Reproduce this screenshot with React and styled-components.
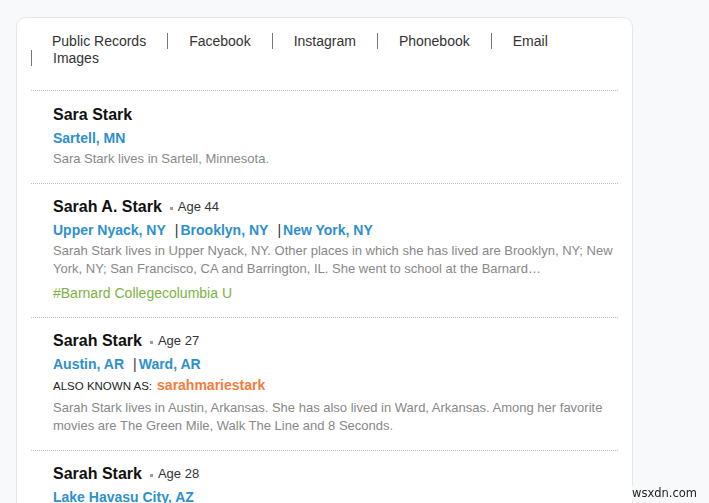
import React from "react";
import styled, { createGlobalStyle } from "styled-components";

const Global = createGlobalStyle`
  html, body { margin: 0; padding: 0; overflow: hidden; }
  body {
    background: #f8f9fb;
    font-family: "Liberation Sans", Arial, sans-serif;
    color: #333;
  }
`;

const Page = styled.div`
  padding: 17px 0 0 16px;
`;

const Card = styled.div`
  width: 587px;
  background: #fff;
  border: 1px solid #e6e6e8;
  border-radius: 10px;
  padding: 15px 14px 0;
  min-height: 520px;
`;

const Nav = styled.ul`
  list-style: none;
  margin: 0;
  padding: 0 0 23px;
  font-size: 14px;
  line-height: 17px;
  color: #333;
  border-bottom: 1px dotted #bdbdbd;
`;

const NavItem = styled.li`
  display: inline-block;
  padding: 0 21px;
  border-left: 1px solid ${(p) => (p.$first ? "transparent" : "#777")};
  line-height: 16px;
  margin-bottom: 1px;
  &:first-child { padding-left: 20px; }
`;

const Record = styled.div`
  padding: 13px 0 15px 22px;
  border-bottom: 1px dotted #bdbdbd;
`;

const NameRow = styled.div`
  display: flex;
  align-items: center;
  line-height: 20px;
  margin-bottom: 3px;
  padding-top: ${(p) => (p.$shift ? "1px" : "0")};
`;

const Name = styled.span`
  font-size: 16px;
  font-weight: bold;
  color: #111;
`;

const Dot = styled.span`
  width: 3px;
  height: 3px;
  background: #9a9a9a;
  margin: 2px 5px 0 8px;
`;

const Age = styled.span`
  font-size: 13px;
  color: #333;
`;

const Locations = styled.div`
  font-size: 14px;
  line-height: 20px;
  font-weight: bold;
  color: #2e90cd;
  margin-bottom: 2px;
`;

const Sep = styled.span`
  font-weight: normal;
  color: #3a3030;
  margin: 0 2px 0 9px;
`;

const Aka = styled.div`
  font-size: 11.5px;
  line-height: 18px;
  color: #222;
  text-transform: uppercase;
  margin: 2px 0 4px;
`;

const AkaName = styled.span`
  text-transform: none;
  font-size: 14px;
  font-weight: bold;
  color: #f47c3c;
  margin-left: 5px;
`;

const Desc = styled.div`
  font-size: 13px;
  line-height: 18px;
  color: #888;
`;

const Tag = styled.div`
  font-size: 14px;
  line-height: 18px;
  color: #7cb342;
  margin-top: 6px;
`;

const Watermark = styled.div`
  position: fixed;
  right: 12px;
  bottom: 3px;
  font-family: "DejaVu Sans", sans-serif;
  font-size: 11.5px;
  line-height: 14px;
  color: #222;
  background: #f8f9fb;
`;

const navItems = ["Public Records", "Facebook", "Instagram", "Phonebook", "Email", "Images"];

const records = [
  {
    name: "Sara Stark",
    locations: ["Sartell, MN"],
    desc: "Sara Stark lives in Sartell, Minnesota.",
    shift: true,
  },
  {
    name: "Sarah A. Stark",
    age: 44,
    locations: ["Upper Nyack, NY", "Brooklyn, NY", "New York, NY"],
    desc:
      "Sarah Stark lives in Upper Nyack, NY. Other places in which she has lived are Brooklyn, NY; New York, NY; San Francisco, CA and Barrington, IL. She went to school at the Barnard\u2026",
    tag: "#Barnard Collegecolumbia U",
  },
  {
    name: "Sarah Stark",
    age: 27,
    locations: ["Austin, AR", "Ward, AR"],
    aka: "sarahmariestark",
    desc:
      "Sarah Stark lives in Austin, Arkansas. She has also lived in Ward, Arkansas. Among her favorite movies are The Green Mile, Walk The Line and 8 Seconds.",
  },
  {
    name: "Sarah Stark",
    age: 28,
    locations: ["Lake Havasu City, AZ"],
    desc: "Sarah Stark lives in Lake Havasu City, Arizona.",
  },
];

export default function App() {
  return (
    <>
      <Global />
      <Page>
        <Card>
          <Nav>
            {navItems.map((n, i) => (
              <NavItem key={n} $first={i === 0}>
                {n}
              </NavItem>
            ))}
          </Nav>
          {records.map((r, i) => (
            <Record key={i}>
              <NameRow $shift={r.shift}>
                <Name>{r.name}</Name>
                {r.age && (
                  <>
                    <Dot />
                    <Age>Age {r.age}</Age>
                  </>
                )}
              </NameRow>
              <Locations>
                {r.locations.map((l, j) => (
                  <React.Fragment key={l}>
                    {j > 0 && <Sep>|</Sep>}
                    {l}
                  </React.Fragment>
                ))}
              </Locations>
              {r.aka && (
                <Aka>
                  Also known as:<AkaName>{r.aka}</AkaName>
                </Aka>
              )}
              <Desc>{r.desc}</Desc>
              {r.tag && <Tag>{r.tag}</Tag>}
            </Record>
          ))}
        </Card>
      </Page>
      <Watermark>wsxdn.com</Watermark>
    </>
  );
}
